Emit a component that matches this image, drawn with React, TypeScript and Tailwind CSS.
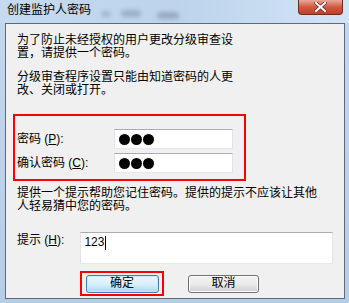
import React from 'react';

const font = { fontFamily: '"Liberation Sans", "Noto Sans CJK SC", sans-serif' };

function Dots() {
  return (
    <div className="flex items-center gap-[1px] pl-[4px]">
      <span className="w-[11px] h-[11px] rounded-full bg-black" />
      <span className="w-[11px] h-[11px] rounded-full bg-black" />
      <span className="w-[11px] h-[11px] rounded-full bg-black" />
    </div>
  );
}

function PasswordBox() {
  return (
    <div className="w-[119px] h-[20px] bg-white border border-[#abadb3] border-l-[#e2e3ea] border-r-[#e2e3ea] border-b-[#e3e9ef] flex items-center">
      <Dots />
    </div>
  );
}

export default function App() {
  return (
    <div
      className="w-[349px] h-[303px] overflow-hidden bg-gradient-to-b from-[#c3d8ee] to-[#b6cde6] text-[12px] leading-[13px] text-black"
      style={font}
    >
      {/* Title bar */}
      <div className="h-[23px] flex items-start bg-gradient-to-r from-[#c6dbf1] via-[#bcd3ec] to-[#d3e4f5]">
        <div className="pl-[7px] pt-[4px] text-black">创建监护人密码</div>
        {/* blurred aero glass shapes */}
        <div className="flex items-center pt-[8px] ml-[10px] gap-[10px] opacity-60">
          <span className="w-[10px] h-[6px] rounded-full bg-[#8fa3ba] blur-[2px]" />
          <span className="w-[20px] h-[7px] rounded-full bg-[#8296ae] blur-[2px]" />
          <span className="w-[22px] h-[7px] rounded-full bg-[#7d90a8] blur-[2px] mt-[4px] ml-[6px]" />
        </div>
        <div className="ml-auto mr-[6px] w-[45px] h-[15px] rounded-b-[4px] border border-t-0 border-[#6e2b20] bg-gradient-to-b from-[#e8a89a] via-[#d2573f] to-[#c0402a] flex items-center justify-center">
          <svg width="13" height="10" viewBox="0 0 13 10">
            <path d="M2 1 L11 9 M11 1 L2 9" stroke="#5a2018" strokeWidth="3.4" strokeLinecap="square" />
            <path d="M2 1 L11 9 M11 1 L2 9" stroke="#fff" strokeWidth="2.2" strokeLinecap="square" />
          </svg>
        </div>
      </div>

      {/* Client panel */}
      <div className="ml-[5px] w-[340px] h-[276px] bg-[#f0f0f0] border border-[#5b6a7d] px-[11px] pt-[10px]">
        <p>
          为了防止未经授权的用户更改分级审查设
          <br />
          置，请提供一个密码。
        </p>
        <p className="mt-[11px]">
          分级审查程序设置只能由知道密码的人更
          <br />
          改、关闭或打开。
        </p>

        <div className="mt-[17px] -ml-[4px] w-[233px] border-2 border-[#ff0000] pl-[2px] pt-[13px] pb-[6px] flex flex-col gap-[4px]">
          <div className="flex items-center h-[20px]">
            <span className="w-[97px]">
              密码 (<u>P</u>):
            </span>
            <PasswordBox />
          </div>
          <div className="flex items-center h-[20px]">
            <span className="w-[97px]">
              确认密码 (<u>C</u>):
            </span>
            <PasswordBox />
          </div>
        </div>

        <p className="mt-[6px]">
          提供一个提示帮助您记住密码。提供的提示不应该让其他
          <br />
          人轻易猜中您的密码。
        </p>

        <div className="mt-[19px] flex items-start">
          <span className="w-[64px] pt-[2px]">
            提示 (<u>H</u>):
          </span>
          <div className="w-[255px] h-[32px] bg-white border border-[#abadb3] border-l-[#e2e3ea] border-r-[#e2e3ea] border-b-[#e3e9ef] pl-[3px] pt-[3px] flex items-start">
            <span>123</span>
            <span className="w-[1px] h-[14px] bg-black ml-[1px]" />
          </div>
        </div>

        <div className="mt-[7px] flex items-center">
          <div className="ml-[63px] border-2 border-[#ff0000] w-[84px] h-[25px] flex items-center justify-center">
            <div className="w-[73px] h-[18px] rounded-[3px] border border-[#3c7fb1] bg-gradient-to-b from-[#eaf6fd] via-[#d9f0fc] to-[#a7d9f5] shadow-[inset_0_0_0_1px_#c9ecfc] flex items-center justify-center">
              确定
            </div>
          </div>
          <div className="ml-[24px] w-[71px] h-[18px] rounded-[3px] border border-[#707070] bg-gradient-to-b from-[#f2f2f2] via-[#ebebeb] to-[#cfcfcf] shadow-[inset_0_0_0_1px_#fcfcfc] flex items-center justify-center">
            取消
          </div>
        </div>
      </div>
    </div>
  );
}
